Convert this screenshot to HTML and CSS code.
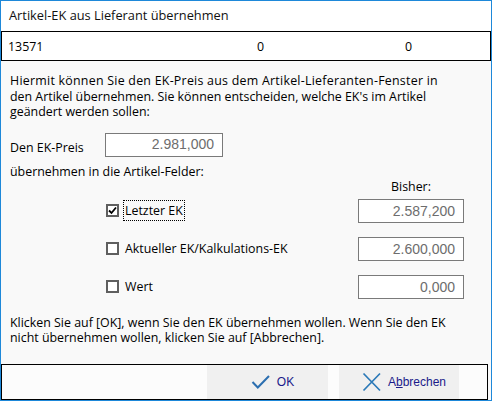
FILE: index.html
```html
<!DOCTYPE html>
<html lang="de">
<head>
<meta charset="utf-8">
<title>Artikel-EK aus Lieferant übernehmen</title>
<link rel="stylesheet" href="styles.css">
</head>
<body>
<div class="window">
  <div class="titlebar">Artikel-EK aus Lieferant übernehmen</div>
  <div class="inforow"><span>13571</span><span>0</span><span>0</span></div>
  <div class="content">
    <p class="intro"><span class="spread">Hiermit können Sie den EK-Preis aus dem Artikel-Lieferanten-Fenster in</span><br>den Artikel übernehmen. Sie können entscheiden, welche EK's im Artikel<br>geändert werden sollen:</p>
    <div class="price-row">
      <span class="price-label">Den EK-Preis</span>
      <div class="numbox numbox-wide">2.981,000</div>
    </div>
    <p class="sub">übernehmen in die Artikel-Felder:</p>
    <div class="options">
      <div class="bisher">Bisher:</div>
      <div class="opt opt-first">
        <div class="check">
          <span class="box"><svg width="9" height="9" viewBox="0 0 9 9"><path d="M1 4.5 L3.5 7 L8 1.5" fill="none" stroke="#000" stroke-width="1.8"/></svg></span>
          <span class="lbl lbl-focus">Letzter EK</span>
        </div>
        <div class="numbox">2.587,200</div>
      </div>
      <div class="opt">
        <div class="check">
          <span class="box"></span>
          <span class="lbl">Aktueller EK/Kalkulations-EK</span>
        </div>
        <div class="numbox">2.600,000</div>
      </div>
      <div class="opt">
        <div class="check">
          <span class="box"></span>
          <span class="lbl">Wert</span>
        </div>
        <div class="numbox">0,000</div>
      </div>
    </div>
    <p class="outro">Klicken Sie auf [OK], wenn Sie den EK übernehmen wollen. Wenn Sie den EK<br>nicht übernehmen wollen, klicken Sie auf [Abbrechen].</p>
  </div>
  <div class="footer">
    <button class="btn btn-ok"><svg class="ico" width="20" height="20" viewBox="0 0 20 20"><path d="M1.5 10 L6.8 15.5 L18 4" fill="none" stroke="#2c6fb0" stroke-width="2"/></svg><span>OK</span></button>
    <button class="btn btn-cancel"><svg class="ico" width="20" height="20" viewBox="0 0 20 20"><path d="M1.5 1.5 L18 18.5 M18 1.5 L1.5 18.5" fill="none" stroke="#2b79b8" stroke-width="1.7"/></svg><span>A<u>b</u>brechen</span></button>
  </div>
</div>
</body>
</html>
```
FILE: styles.css
```css
html, body {
  margin: 0;
  padding: 0;
}
body {
  width: 492px;
  height: 401px;
  overflow: hidden;
  font-family: "Segoe UI", "Open Sans", "Noto Sans", sans-serif;
  font-size: 12.4px;
  color: #000;
}
.window {
  box-sizing: border-box;
  width: 492px;
  height: 401px;
  border: 1px solid #1e88d9;
  background: #f9f9f9;
  display: flex;
  flex-direction: column;
}
.titlebar {
  height: 30px;
  flex: none;
  box-sizing: border-box;
  padding: 6px 0 0 8px;
  line-height: 16px;
  font-size: 12.8px;
  background: #fff;
  color: #111;
}
.inforow {
  height: 30px;
  flex: none;
  box-sizing: border-box;
  border: 1px solid #000;
  background: #fff;
  padding: 7px 0 0 6px;
  line-height: 16px;
  display: grid;
  grid-template-columns: 249px 148px 1fr;
}
.content {
  flex: none;
  padding: 12px 27px 0 9px;
  line-height: 15.5px;
}
.intro, .sub, .outro {
  margin: 0;
}
.spread {
  letter-spacing: 0.25px;
}
.price-row {
  display: flex;
  align-items: flex-start;
  margin-top: 13.5px;
  height: 24px;
}
.price-label {
  width: 95px;
  padding-top: 6.5px;
}
.numbox {
  box-sizing: border-box;
  width: 106px;
  height: 24px;
  border: 1px solid #7a7a7a;
  background: #fff;
  padding: 0 8px 0 0;
  text-align: right;
  font-family: "Liberation Sans", Arial, sans-serif;
  font-size: 14px;
  line-height: 22px;
  color: #6d6d6d;
}
.numbox-wide {
  width: 118px;
  line-height: 20px;
}
.sub {
  margin-top: 6.6px;
}
.options {
  padding-left: 96px;
}
.bisher {
  width: 106px;
  margin-left: auto;
  text-align: center;
}
.opt {
  display: flex;
  align-items: center;
  justify-content: space-between;
  height: 24px;
  margin-top: 14px;
}
.opt-first {
  margin-top: 4.4px;
}
.check {
  display: flex;
  align-items: center;
}
.box {
  box-sizing: border-box;
  width: 13px;
  height: 13px;
  border: 2px solid #5f5f5f;
  background: #fff;
  display: flex;
  align-items: center;
  justify-content: center;
  margin-right: 4px;
}
.box svg {
  display: block;
}
.lbl {
  border: 1px solid transparent;
  padding: 2px 1px 1px 1px;
  line-height: 16px;
}
.lbl-focus {
  border: 1px dotted #000;
}
.outro {
  margin-top: 15.6px;
}
.footer {
  margin-top: auto;
  margin-right: 3px;
  height: 36px;
  flex: none;
  box-sizing: border-box;
  border: 1px solid #000;
  background: #fcfcfc;
  display: flex;
  justify-content: flex-end;
  gap: 11px;
  padding-right: 28px;
}
.btn {
  margin: 0;
  border: none;
  background: #f0f0f0;
  height: 34px;
  padding: 0 0 0 10px;
  display: flex;
  align-items: center;
  justify-content: center;
  gap: 6px;
  font-family: "Liberation Sans", Arial, sans-serif;
  font-size: 12px;
  color: #1a1a8a;
}
.btn-ok {
  width: 121px;
}
.btn-cancel {
  width: 120px;
}
.ico {
  display: block;
}
```
